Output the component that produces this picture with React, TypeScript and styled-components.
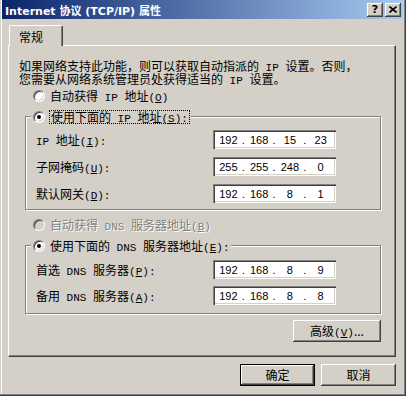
import React from 'react';
import styled, { createGlobalStyle } from 'styled-components';

const GlobalStyle = createGlobalStyle`
  html, body { margin: 0; padding: 0; background: #d4d0c8; }
  body { width: 406px; height: 396px; overflow: hidden; }
`;

const CJK = `"Noto Sans CJK SC", sans-serif`;

const Window = styled.div`
  box-sizing: border-box;
  width: 406px;
  height: 396px;
  background: #d4d0c8;
  padding: 0 3px 3px 2px;
  box-shadow: inset -1px -1px #404040, inset -2px -2px #808080, inset 1px 0 #d4d0c8, inset 2px 0 #fff;
  display: flex;
  flex-direction: column;
  font-family: ${CJK};
  font-size: 12px;
  line-height: 12px;
  color: #000;
`;

const TitleBar = styled.div`
  height: 19px;
  flex: none;
  display: flex;
  align-items: center;
  gap: 2px;
  padding: 0 2px 0 3px;
  background: linear-gradient(to right, #0a246a, #a6caf0);
`;

const Title = styled.div`
  flex: 1;
  color: #fff;
  font: bold 11px "DejaVu Sans", "Noto Sans CJK SC", sans-serif;
  white-space: nowrap;
`;

const CaptionButton = styled.div`
  width: 16px;
  height: 14px;
  box-sizing: border-box;
  background: #d4d0c8;
  box-shadow: inset -1px -1px #404040, inset 1px 1px #fff, inset -2px -2px #808080;
  display: flex;
  align-items: center;
  justify-content: center;
  font: bold 11px "DejaVu Sans", sans-serif;
  padding-bottom: 1px;
`;

const Body = styled.div`
  flex: 1;
  display: flex;
  flex-direction: column;
  padding: 6px 7px 0 6px;
`;

const TabStrip = styled.div`
  display: flex;
  height: 21px;
  margin-bottom: -1px;
  position: relative;
  z-index: 1;
  padding-left: 1px;
`;

const Tab = styled.div`
  width: 54px;
  box-sizing: border-box;
  padding: 5px 0 0 9px;
  border: 1px solid #fff;
  border-right-color: #404040;
  border-bottom: none;
  border-radius: 2px 2px 0 0;
  box-shadow: inset -1px 0 #808080;
  background: #d4d0c8;
`;

const Panel = styled.div`
  height: 312px;
  box-sizing: border-box;
  border: 1px solid #fff;
  border-right-color: #404040;
  border-bottom-color: #404040;
  box-shadow: inset -1px -1px #808080;
  padding: 13px 14px 0 10px;
  display: flex;
  flex-direction: column;
`;

const Intro = styled.p`
  margin: 0;
  line-height: 13px;
  white-space: nowrap;
`;

/* SimSun-like half-width latin */
const Lat = styled.span`
  font-family: "Liberation Mono", monospace;
  font-size: 11px;
  line-height: 0;
  white-space: pre;
`;

const RadioRow = styled.div<{ $disabled?: boolean; $indent?: number }>`
  display: flex;
  align-items: center;
  gap: 5px;
  height: 13px;
  margin-left: ${p => p.$indent ?? 0}px;
  color: ${p => (p.$disabled ? '#808080' : '#000')};
  text-shadow: ${p => (p.$disabled ? '1px 1px #fff' : 'none')};
  white-space: nowrap;
`;

const RadioDot = styled.span<{ $checked?: boolean; $disabled?: boolean }>`
  flex: none;
  width: 12px;
  height: 12px;
  box-sizing: border-box;
  border-radius: 50%;
  border: 1px solid;
  border-color: #808080 #fff #fff #808080;
  box-shadow: inset 1px 1px #404040, inset -1px -1px #d4d0c8;
  background: ${p => (p.$disabled ? '#d4d0c8' : '#fff')};
  display: flex;
  align-items: center;
  justify-content: center;
  &::after {
    content: '';
    display: ${p => (p.$checked ? 'block' : 'none')};
    width: 4px;
    height: 4px;
    border-radius: 50%;
    background: #000;
  }
`;

const Focus = styled.span`
  outline: 1px dotted #000;
  outline-offset: 0;
  padding: 0 1px;
`;

const Group = styled.fieldset<{ $top: number; $pt: number; $pb: number; $gap: number }>`
  margin: ${p => p.$top}px 0 0 6px;
  padding: ${p => p.$pt}px 0 ${p => p.$pb}px 10px;
  border: 1px solid #808080;
  box-shadow: inset 1px 1px #fff, 1px 1px #fff;
  display: grid;
  grid-template-columns: 177px 123px;
  row-gap: ${p => p.$gap}px;
  align-items: center;
`;

const Legend = styled.legend`
  padding: 0 2px 0 2px;
  margin-left: -5px;
  background: #d4d0c8;
`;

const FieldLabel = styled.span`
  white-space: nowrap;
`;

const IpBox = styled.div`
  width: 123px;
  height: 19px;
  box-sizing: border-box;
  background: #fff;
  box-shadow: inset 1px 1px #808080, inset 2px 2px #404040, inset -1px -1px #fff, inset -2px -2px #d4d0c8;
  display: flex;
  align-items: center;
  padding: 1px 2px 0 2px;
  font: 11px "Liberation Sans", sans-serif;
  line-height: 12px;
`;

const Octet = styled.span`
  width: 27px;
  text-align: center;
`;

const Dot = styled.span`
  width: 4px;
  text-align: left;
`;

const Button = styled.button<{ $default?: boolean; $width: number }>`
  width: ${p => p.$width}px;
  height: 22px;
  box-sizing: border-box;
  border: ${p => (p.$default ? '1px solid #000' : 'none')};
  padding: 0;
  background: #d4d0c8;
  box-shadow: inset -1px -1px #404040, inset 1px 1px #fff, inset -2px -2px #808080;
  font-family: ${CJK};
  font-size: 12px;
  line-height: 12px;
  color: #000;
`;

const RadioLine = styled.div<{ $top: number }>`
  margin-top: ${p => p.$top}px;
`;

const AdvancedRow = styled.div`
  display: flex;
  justify-content: flex-end;
  margin-top: 6px;
`;

const Footer = styled.div`
  display: flex;
  justify-content: flex-end;
  gap: 6px;
  margin-top: 7px;
`;

const Key: React.FC<{ k: string; colon?: boolean }> = ({ k, colon }) => (
  <Lat>
    (<u>{k}</u>){colon ? ':' : ''}
  </Lat>
);

const IpField: React.FC<{ value: string }> = ({ value }) => {
  const parts = value.split('.');
  return (
    <IpBox>
      {parts.map((n, i) => (
        <React.Fragment key={i}>
          <Octet>{n}</Octet>
          {i < 3 && <Dot>.</Dot>}
        </React.Fragment>
      ))}
    </IpBox>
  );
};

const Radio: React.FC<{ checked?: boolean; disabled?: boolean; indent?: number; children: React.ReactNode }> = ({
  checked,
  disabled,
  indent,
  children,
}) => (
  <RadioRow $disabled={disabled} $indent={indent}>
    <RadioDot $checked={checked} $disabled={disabled} />
    <span>{children}</span>
  </RadioRow>
);

export default function App() {
  return (
    <>
      <GlobalStyle />
      <Window>
        <TitleBar>
          <Title>Internet 协议 (TCP/IP) 属性</Title>
          <CaptionButton>?</CaptionButton>
          <CaptionButton>
            <svg width="8" height="7" viewBox="0 0 8 7">
              <path d="M0.5 0.5 L7.5 6.5 M7.5 0.5 L0.5 6.5" stroke="#000" strokeWidth="1.6" fill="none" />
            </svg>
          </CaptionButton>
        </TitleBar>
        <Body>
          <TabStrip>
            <Tab>常规</Tab>
          </TabStrip>
          <Panel>
            <Intro>
              如果网络支持此功能，则可以获取自动指派的<Lat> IP </Lat>设置。否则，
              <br />
              您需要从网络系统管理员处获得适当的<Lat> IP </Lat>设置。
            </Intro>
            <RadioLine $top={4}>
              <Radio indent={14}>
                自动获得<Lat> IP </Lat>地址<Key k="O" />
              </Radio>
            </RadioLine>
            <Group $top={8} $pt={7} $pb={6} $gap={8}>
              <Legend>
                <RadioRow>
                  <RadioDot $checked />
                  <Focus>
                    使用下面的<Lat> IP </Lat>地址<Key k="S" colon />
                  </Focus>
                </RadioRow>
              </Legend>
              <FieldLabel>
                <Lat>IP </Lat>地址<Key k="I" colon />
              </FieldLabel>
              <IpField value="192.168.15.23" />
              <FieldLabel>
                子网掩码<Key k="U" colon />
              </FieldLabel>
              <IpField value="255.255.248.0" />
              <FieldLabel>
                默认网关<Key k="D" colon />
              </FieldLabel>
              <IpField value="192.168.8.1" />
            </Group>
            <RadioLine $top={8}>
              <Radio indent={14} disabled>
                自动获得<Lat> DNS </Lat>服务器地址<Key k="B" />
              </Radio>
            </RadioLine>
            <Group $top={8} $pt={8} $pb={8} $gap={7}>
              <Legend>
                <Radio checked>
                  使用下面的<Lat> DNS </Lat>服务器地址<Key k="E" colon />
                </Radio>
              </Legend>
              <FieldLabel>
                首选<Lat> DNS </Lat>服务器<Key k="P" colon />
              </FieldLabel>
              <IpField value="192.168.8.9" />
              <FieldLabel>
                备用<Lat> DNS </Lat>服务器<Key k="A" colon />
              </FieldLabel>
              <IpField value="192.168.8.8" />
            </Group>
            <AdvancedRow>
              <Button $width={88}>
                高级<Key k="V" />...
              </Button>
            </AdvancedRow>
          </Panel>
          <Footer>
            <Button $default $width={75}>
              确定
            </Button>
            <Button $width={75}>取消</Button>
          </Footer>
        </Body>
      </Window>
    </>
  );
}
